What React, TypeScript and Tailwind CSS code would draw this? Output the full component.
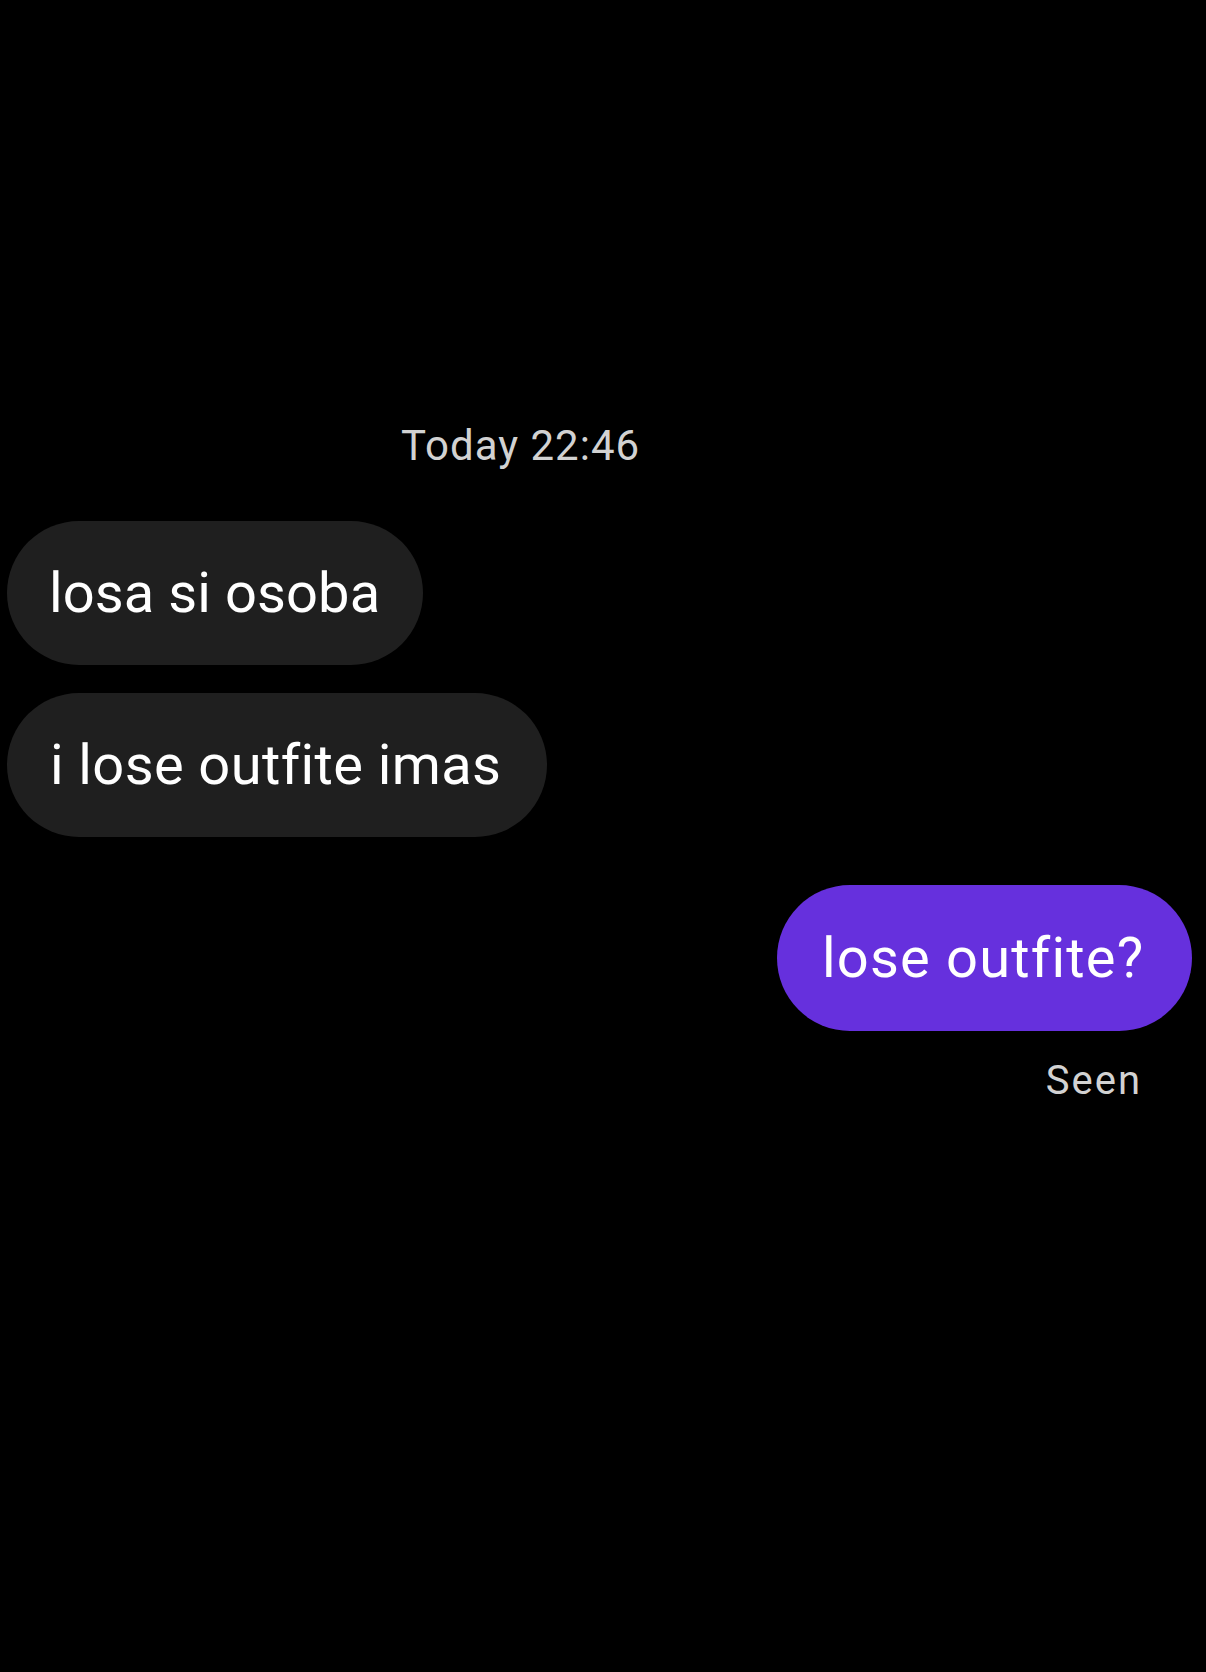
export default function App() {
  return (
    <div
      className="min-h-[1672px] w-full bg-black flex flex-col"
      style={{ fontFamily: "Roboto, 'Noto Sans', sans-serif" }}
    >
      {/* date stamp */}
      <div className="mt-[425px] ml-[401px] text-[42px] leading-none tracking-[1px] text-[#d2d2d2]">
        Today 22:46
      </div>

      {/* incoming */}
      <div className="mt-[54px] ml-[7px] flex flex-col gap-[28px] items-start">
        <div className="h-[144px] w-[416px] rounded-full bg-[#1f1f1f] flex items-center pl-[42px]">
          <span className="text-[56px] leading-none tracking-[0.1px] text-white">losa si osoba</span>
        </div>
        <div className="h-[144px] w-[540px] rounded-full bg-[#1f1f1f] flex items-center pl-[43px]">
          <span className="text-[56px] leading-none tracking-[0.4px] text-white">i lose outfite imas</span>
        </div>
      </div>

      {/* outgoing */}
      <div className="mt-[48px] mr-[14px] self-end h-[146px] w-[415px] rounded-full bg-[#6630dd] flex items-center pl-[45px]">
        <span className="text-[56px] leading-none tracking-[1.2px] text-white">lose outfite?</span>
      </div>
      <div className="mt-[30px] mr-[64px] self-end text-[40px] leading-none tracking-[2px] text-[#d2d2d2]">
        Seen
      </div>
    </div>
  )
}
